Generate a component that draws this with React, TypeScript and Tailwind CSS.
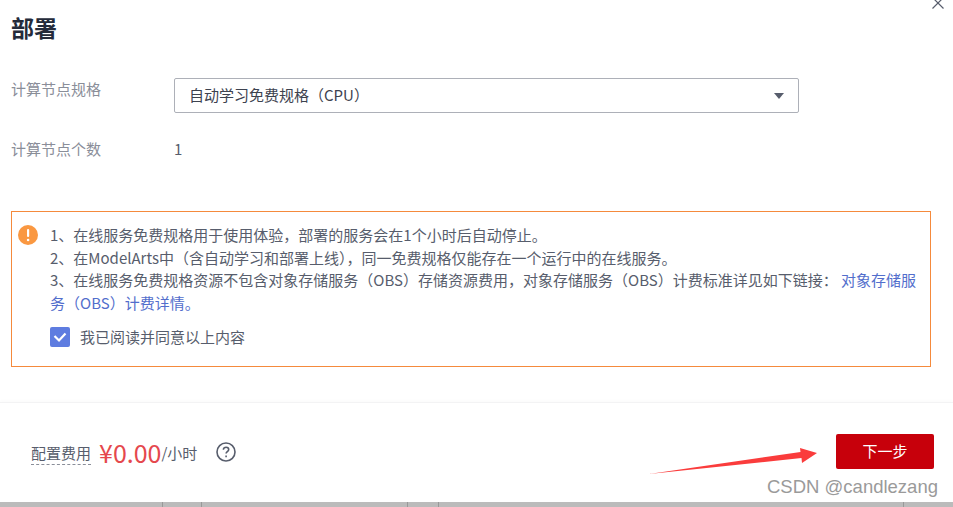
const CJK = 'font-["Noto_Sans_CJK_SC","Noto_Sans",sans-serif]';

function Field({ label, children }: { label: string; children: React.ReactNode }) {
  return (
    <div className="flex items-start">
      <div className="w-[163px] shrink-0 text-[15px] leading-[22px] text-[#8a8e99]">{label}</div>
      {children}
    </div>
  );
}

export default function App() {
  return (
    <div className={`relative flex h-[507px] w-[953px] flex-col overflow-hidden bg-white ${CJK}`}>
      {/* close */}
      <svg className="absolute left-[931px] top-[-4px]" width="14" height="14" viewBox="0 0 14 14" fill="none" stroke="#575d6c" strokeWidth="1.2">
        <path d="M1.5 1.5 12.5 12.5M12.5 1.5 1.5 12.5" />
      </svg>

      <div className="h-[402px] shrink-0 px-[11px]">
        <h2 className="mt-[11px] text-[23px] font-bold leading-[32px] text-[#252b3a]">部署</h2>

        <div className="mt-[35px]">
          <Field label="计算节点规格">
            <div className="flex h-[35px] w-[625px] items-center justify-between rounded-[2px] border border-[#adb0b8] pl-[14px] pr-[14px]">
              <span className="text-[15px] text-[#3d424f]">自动学习免费规格（CPU）</span>
              <svg width="10" height="6" viewBox="0 0 10 6" fill="#575d6c"><path d="M0 0h10L5 6z" /></svg>
            </div>
          </Field>
        </div>

        <div className="mt-[25px]">
          <Field label="计算节点个数">
            <span className="text-[15px] leading-[22px] text-[#575d6c]">1</span>
          </Field>
        </div>

        <div className="mt-[51px] flex h-[156px] w-[920px] border border-[#f58a3c] pl-[6px] pt-[12px]">
          <svg className="mt-[1px] shrink-0" width="20" height="20" viewBox="0 0 20 20">
            <circle cx="10" cy="10" r="10" fill="#fa9841" />
            <rect x="9" y="4" width="2.2" height="8" rx="1" fill="#fff" />
            <circle cx="10.1" cy="15" r="1.3" fill="#fff" />
          </svg>
          <div className="ml-[12px] w-[868px]">
            <div className="text-[15px] leading-[22.5px] text-[#575d6c]">
              <p>1、在线服务免费规格用于使用体验，部署的服务会在1个小时后自动停止。</p>
              <p>2、在ModelArts中（含自动学习和部署上线），同一免费规格仅能存在一个运行中的在线服务。</p>
              <p>
                3、在线服务免费规格资源不包含对象存储服务（OBS）存储资源费用，对象存储服务（OBS）计费标准详见如下链接：
                <a className="text-[#526ecc]"> 对象存储服务（OBS）计费详情。</a>
              </p>
            </div>
            <div className="mt-[13px] flex items-center">
              <span className="flex h-[20px] w-[20px] items-center justify-center rounded-[2px] bg-[#5e7ce0]">
                <svg width="14" height="12" viewBox="0 0 14 12" fill="none" stroke="#fff" strokeWidth="2.2">
                  <path d="M1.5 5 6 9.500 12.500 2.500" />
                </svg>
              </span>
              <span className="ml-[10px] text-[15px] leading-[20px] text-[#575d6c]">我已阅读并同意以上内容</span>
            </div>
          </div>
        </div>
      </div>

      <div className="flex h-[100px] shrink-0 items-center justify-between border-t-[1px] border-[#f3f3f4] pl-[31px] pr-[19px] shadow-[0_-2px_3px_rgba(0,0,0,0.015)]">
        <div className="mt-[-2px] flex items-center">
          <span className="mt-[3px] border-b border-dashed border-[#8a8e99] text-[15px] leading-[22px] text-[#575d6c]">配置费用</span>
          <span className="ml-[8px] text-[25px] leading-[32px] text-[#e5484d]">¥0.00</span>
          <span className="mt-[3px] text-[15px] text-[#575d6c]">/小时</span>
          <svg className="ml-[19px]" width="20" height="20" viewBox="0 0 20 20" fill="none" stroke="#575d6c" strokeWidth="1.6">
            <circle cx="10" cy="10" r="9" />
            <path d="M7.4 7.800c0-1.600 1.200-2.600 2.700-2.600s2.600 1 2.600 2.300c0 1-.6 1.500-1.400 2.100-.8.6-1.200 1-1.200 2" />
            <path d="M10.100 13.600v1.600" />
          </svg>
        </div>
        <button className="mt-[-3px] h-[35px] w-[98px] rounded-[2px] bg-[#c7000b] text-[15px] text-white">下一步</button>
      </div>

      {/* page behind the dialog */}
      <div className="flex h-[5px] shrink-0 bg-[#bbbbbb]">
        <div className="w-[163px] border-r border-[#999999]" />
        <div className="w-[39px] border-r border-[#999999]" />
        <div className="w-[206px] border-r border-[#999999]" />
        <div className="w-[31px] border-r border-[#999999]" />
        <div className="w-[465px] border-r border-[#999999]" />
      </div>

      {/* annotation arrow */}
      <svg className="absolute left-[648px] top-[446px]" width="175" height="32" viewBox="0 0 175 32">
        <path d="M1 28 152.500 6 152 2 169 7 154 17 153.500 12Z" fill="#fa3c3c" />
      </svg>

      {/* watermark */}
      <span className="absolute left-[767px] top-[475px] font-['Liberation_Sans',sans-serif] text-[18.5px] leading-[24px] text-[#9a9a9a]">CSDN @candlezang</span>
    </div>
  );
}
